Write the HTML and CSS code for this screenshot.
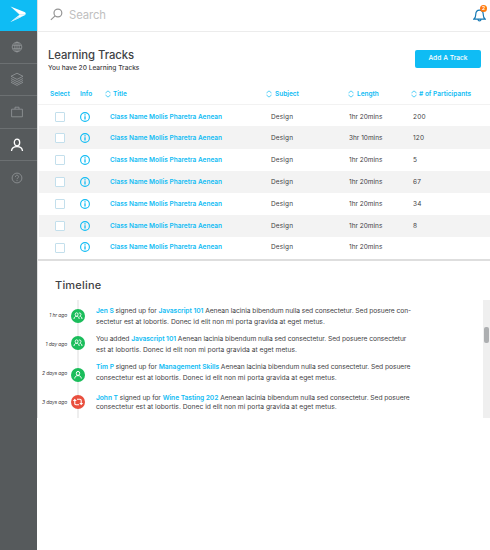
FILE: index.html
```html
<!DOCTYPE html>
<html lang="en">
<head>
<meta charset="utf-8">
<title>Learning Tracks</title>
<link rel="stylesheet" href="styles.css">
</head>
<body>
<svg class="defs" aria-hidden="true">
  <symbol id="info" viewBox="0 0 10 10"><circle cx="5" cy="5" r="4.400" fill="none" stroke="currentColor" stroke-width="1.100"/><path d="M5 4.200v3.200M5 2.300v1.100" stroke="currentColor" stroke-width="1.300"/></symbol>
  <symbol id="sort" viewBox="0 0 6 8"><path d="M.8 3.200V2.700L3 .9l2.200 1.800v.5M.8 4.800v.5L3 7.100l2.200-1.800v-.5" fill="none" stroke="currentColor" stroke-width=".7"/></symbol>
  <symbol id="group" viewBox="0 0 14 14"><g fill="none" stroke="#fff" stroke-width=".9"><ellipse cx="5.600" cy="5.500" rx="1.400" ry="1.700"/><path d="M3 10c.1-1.900 1-2.600 2.600-2.600S8.100 8.100 8.200 10M7.800 4.200c2.400-1.200 3 2.300.9 3 1.500.2 2.200 1 2.300 2.800"/></g></symbol>
  <symbol id="person" viewBox="0 0 14 14"><g fill="none" stroke="#fff"><ellipse cx="7" cy="5.400" rx="1.700" ry="2"/><path d="M3.700 10.500c.2-2 1.400-2.900 3.300-2.900s3.100.9 3.300 2.900"/></g></symbol>
  <symbol id="cycle" viewBox="0 0 14 14"><path d="M6 4.300h3c.8 0 1.200.4 1.200 1.200v3M8 9.700H5c-.8 0-1.200-.4-1.200-1.200v-3" fill="none" stroke="#fff" stroke-width="1.100"/><path d="M8.200 7.900h4l-2 2.300zM1.800 6.100h4l-2-2.300z" fill="#fff"/></symbol>
</svg>
<div class="app">
  <nav class="sidebar">
    <a class="logo"><svg viewBox="0 0 37 31"><path d="M10.500 6.500 20 14.700h5.300c.8-1 .5-2.200-.8-2.700z" fill="#fff"/><path d="M10.500 6.500 20 14.700h5.300l-.5.500-14.300 6.800 9-7.300z" fill="#f3fbff"/><path d="m10.500 22 6.800-5.400 3.700.6z" fill="#c4edfc"/></svg></a>
    <a class="nav-item"><svg viewBox="0 0 12 12"><circle cx="6" cy="6" r="4.800"/><ellipse cx="6" cy="6" rx="2.200" ry="4.800"/><path d="M6 1.200v9.600M1.800 4.300h8.400M1.800 7.700h8.400"/></svg></a>
    <a class="nav-item"><svg class="wide" viewBox="0 0 14 14"><path d="m7 1.200 6 3.100-6 3.100-6-3.100zM1 6.500l6 3.100 6-3.100M1 8.500l6 3.100 6-3.100M1 10.300l6 3.100 6-3.100"/></svg></a>
    <a class="nav-item"><svg viewBox="0 0 12 12"><path d="M.6 3.200h10.800v7.600H.6zM4 3.200V1.200h4v2"/></svg></a>
    <a class="nav-item active"><svg class="wide" viewBox="0 0 14 14"><ellipse cx="7" cy="4.500" rx="2.700" ry="3.300"/><path d="M1.500 13c.2-3 2.200-4.400 5.500-4.400s5.300 1.400 5.500 4.400"/></svg></a>
    <a class="nav-item last"><svg viewBox="0 0 12 12"><circle cx="6" cy="6" r="4.900"/><path d="M4.400 4.900c0-2.200 3.200-2.100 3.200-.2C7.600 6 6 5.900 6 7.200M6 8.100v1"/></svg></a>
  </nav>
  <main class="main">
    <header class="topbar">
      <svg class="search-icon" viewBox="0 0 12 12"><circle cx="7.300" cy="4.600" r="3.600"/><path d="M4.700 7.300.8 11"/></svg>
      <span class="search-text">Search</span>
      <span class="bell"><svg viewBox="0 0 12 13"><path d="M.8 10.300c1.700-1.300 1.600-2.600 1.700-4.300C2.600 3.600 3.900 2 6 2s3.400 1.600 3.500 4c.1 1.700 0 3 1.700 4.300zM4.600 10.600c.1 1.800 2.700 1.800 2.800 0"/></svg><span class="badge">2</span></span>
    </header>
    <section class="heading">
      <div>
        <h1>Learning Tracks</h1>
        <p class="subtitle">You have 20 Learning Tracks</p>
      </div>
      <a class="button">Add A Track</a>
    </section>
    <section class="table">
      <div class="row head"><span>Select</span><span class="info-label">Info</span><span class="sortable"><svg class="sort"><use href="#sort"/></svg>Title</span><span class="sortable subject-head"><svg class="sort"><use href="#sort"/></svg>Subject</span><span class="sortable length-head"><svg class="sort"><use href="#sort"/></svg>Length</span><span class="sortable count-head"><svg class="sort"><use href="#sort"/></svg># of Participants</span></div>
      <div class="row"><span class="check"></span><svg class="info"><use href="#info"/></svg><span class="title">Class Name Mollis Pharetra Aenean</span><span class="subject">Design</span><span class="length">1hr 20mins</span><span class="count">200</span></div>
      <div class="row"><span class="check"></span><svg class="info"><use href="#info"/></svg><span class="title">Class Name Mollis Pharetra Aenean</span><span class="subject">Design</span><span class="length">3hr 10mins</span><span class="count">120</span></div>
      <div class="row"><span class="check"></span><svg class="info"><use href="#info"/></svg><span class="title">Class Name Mollis Pharetra Aenean</span><span class="subject">Design</span><span class="length">1hr 20mins</span><span class="count">5</span></div>
      <div class="row"><span class="check"></span><svg class="info"><use href="#info"/></svg><span class="title">Class Name Mollis Pharetra Aenean</span><span class="subject">Design</span><span class="length">1hr 20mins</span><span class="count">67</span></div>
      <div class="row"><span class="check"></span><svg class="info"><use href="#info"/></svg><span class="title">Class Name Mollis Pharetra Aenean</span><span class="subject">Design</span><span class="length">1hr 20mins</span><span class="count">34</span></div>
      <div class="row"><span class="check"></span><svg class="info"><use href="#info"/></svg><span class="title">Class Name Mollis Pharetra Aenean</span><span class="subject">Design</span><span class="length">1hr 20mins</span><span class="count">8</span></div>
      <div class="row"><span class="check"></span><svg class="info"><use href="#info"/></svg><span class="title">Class Name Mollis Pharetra Aenean</span><span class="subject">Design</span><span class="length">1hr 20mins</span><span class="count"></span></div>
    </section>
    <h2>Timeline</h2>
    <section class="timeline">
      <div class="events">
        <article class="event"><time>1 hr ago</time><svg class="dot"><use href="#group"/></svg><p><b>Jen S</b> signed up for <b>Javascript 101</b> Aenean lacinia bibendum nulla sed consectetur. Sed posuere con-<br><span>sectetur est at lobortis. Donec id elit non mi porta gravida at eget metus.</span></p></article>
        <article class="event second"><time>1 day ago</time><svg class="dot"><use href="#group"/></svg><p>You added <b>Javascript 101</b> Aenean lacinia bibendum nulla sed consectetur. Sed posuere consectetur<br><span>est at lobortis. Donec id elit non mi porta gravida at eget metus.</span></p></article>
        <article class="event third"><time>2 days ago</time><svg class="dot"><use href="#person"/></svg><p><b>Tim P</b> signed up for <b>Management Skills</b> Aenean lacinia bibendum nulla sed consectetur. Sed posuere<br><span>consectetur est at lobortis. Donec id elit non mi porta gravida at eget metus.</span></p></article>
        <article class="event fourth"><time>3 days ago</time><svg class="dot red"><use href="#cycle"/></svg><p><b>John T</b> signed up for <b>Wine Tasting 202</b> Aenean lacinia bibendum nulla sed consectetur. Sed posuere<br><span>consectetur est at lobortis. Donec id elit non mi porta gravida at eget metus.</span></p></article>
      </div>
      <div class="scrollbar"><div class="thumb"></div></div>
    </section>
  </main>
</div>
</body>
</html>
```
FILE: styles.css
```css
* { box-sizing: border-box; }
body { margin: 0; background: #fff; font-family: Inter, "Liberation Sans", sans-serif; font-size: 6.5px; color: #3f4245; }
.defs { display: none; }
h1, h2, p { margin: 0; }
svg { display: block; }

.app { display: flex; align-items: flex-start; height: 550px; white-space: nowrap; }
.sidebar { width: 37px; height: 550px; background: #565a5c; }
.logo { display: block; height: 31px; background: #0fbcf4; }
.logo svg { width: 37px; height: 31px; }
.nav-item { display: flex; align-items: center; justify-content: center; height: 32.5px; padding-right: 3px; border-bottom: 1px solid #6c7072; }
.nav-item.last { border: 0; }
.nav-item svg { width: 12px; height: 12px; fill: none; stroke: #94989a; stroke-width: .8; }
.nav-item .wide { width: 14px; height: 14px; }
.nav-item.active svg { stroke: #fff; stroke-width: 1.3; }
.nav-item.active .wide { margin-top: 2px; }
.nav-item.last svg { margin-top: 1px; }

.main { flex: 1; border-left: 1px solid #e0e1e1; }
.topbar { display: flex; align-items: center; height: 32px; padding: 0 4px 2px 12px; border-bottom: 1px solid #ececec; }
.search-icon { width: 13px; height: 13px; margin-top: -1px; fill: none; stroke: #949494; stroke-width: 1.1; }
.search-text { margin-left: 6px; font-size: 11.3px; letter-spacing: -.1px; color: #c0c0c0; }
.bell { position: relative; margin-left: auto; }
.bell svg { width: 13px; height: 14px; fill: none; stroke: #1478b4; stroke-width: 1.1; }
.badge { position: absolute; top: -3px; right: -1px; width: 7px; height: 7px; border-radius: 50%; background: #ff7a0f; color: #fff; font-size: 5px; font-weight: 700; line-height: 7px; text-align: center; }

.heading { display: flex; justify-content: space-between; height: 51px; padding: 15px 9px 0 10px; }
h1 { font-size: 11.3px; font-weight: 500; line-height: 16px; letter-spacing: -.06px; }
.subtitle { margin-top: 1px; font-size: 6.6px; font-weight: 500; line-height: 9px; }
.button { width: 66px; height: 18px; margin-top: 2.5px; border-radius: 2px; background: #0fbcf4; color: #fff; font-size: 6.7px; font-weight: 500; line-height: 17px; text-align: center; }

.table { border-bottom: 2px solid #dedede; }
.row { display: grid; grid-template-columns: 30px 25px 160px 77px 64px 1fr; align-items: center; height: 22px; padding-left: 12px; }
.row.head { height: 22px; color: #0fbcf4; font-weight: 600; border-bottom: 1px solid #f2f2f2; }
.row:nth-child(2) { height: 21px; padding-top: 2px; }
.row:nth-child(3) { height: 23px; }
.row:nth-child(8) { padding-bottom: 2px; }
.row:nth-child(8) .check { margin-top: 2px; }
.row:nth-child(odd):not(.head) { margin-left: 1px; padding-left: 11px; background: #f3f3f3; }
.sortable { display: flex; align-items: center; gap: 2px; }
.sort { width: 6px; height: 8px; }
.subject-head, .length-head { gap: 3px; }
.subject-head { padding-left: 1px; }
.length-head { padding-left: 6px; }
.count-head { padding-left: 5px; letter-spacing: .03px; }
.check { width: 10px; height: 10px; margin-left: 5px; border: 1px solid #c3dfec; border-radius: 1px; background: #fff; }
.info { width: 10px; height: 10px; color: #0fbcf4; }
.title { padding-left: 5px; color: #0fbcf4; font-weight: 600; letter-spacing: .01px; }
.subject { padding-left: 6px; letter-spacing: .14px; }
.length { padding-left: 7px; }
.count { padding-left: 7px; letter-spacing: .2px; }

h2 { height: 39px; padding: 17px 0 0 17px; font-size: 11px; font-weight: 500; line-height: 15px; letter-spacing: .2px; }
.timeline { display: flex; height: 118px; }
.events { flex: 1; padding-top: 6px; background: linear-gradient(#eee, #eee) 39px 0 / 2px 100% no-repeat; }
.event { display: grid; grid-template-columns: 29px 14px 1fr; height: 27px; align-items: start; }
.event.second { height: 28.5px; }
.event.third { height: 32.5px; }
time { padding-top: 5px; font-size: 5px; font-style: italic; line-height: 8px; letter-spacing: -.15px; text-align: right; }
.dot { width: 14px; height: 14px; margin: 2.5px 0 0 4px; border-radius: 50%; background: #1bbd5b; }
.third .dot { margin-top: 6px; }
.fourth .dot { margin-top: .5px; }
.second time { padding-top: 7px; }
.third time { padding-top: 7px; }
.fourth time { padding-top: 4px; }
.dot.red { background: #e94f3e; }
.event p { padding-left: 15px; font-size: 6.7px; line-height: 11px; letter-spacing: -.055px; }
.second p { padding-top: .5px; }
.event p span { letter-spacing: .01px; }
.event.fourth p { line-height: 9px; }
.event b { color: #0fbcf4; font-weight: 600; }

.scrollbar { width: 7px; padding: 27px 1px 0; background: #efefef; }
.thumb { height: 16px; border-radius: 2px; background: #adafb1; }
```
